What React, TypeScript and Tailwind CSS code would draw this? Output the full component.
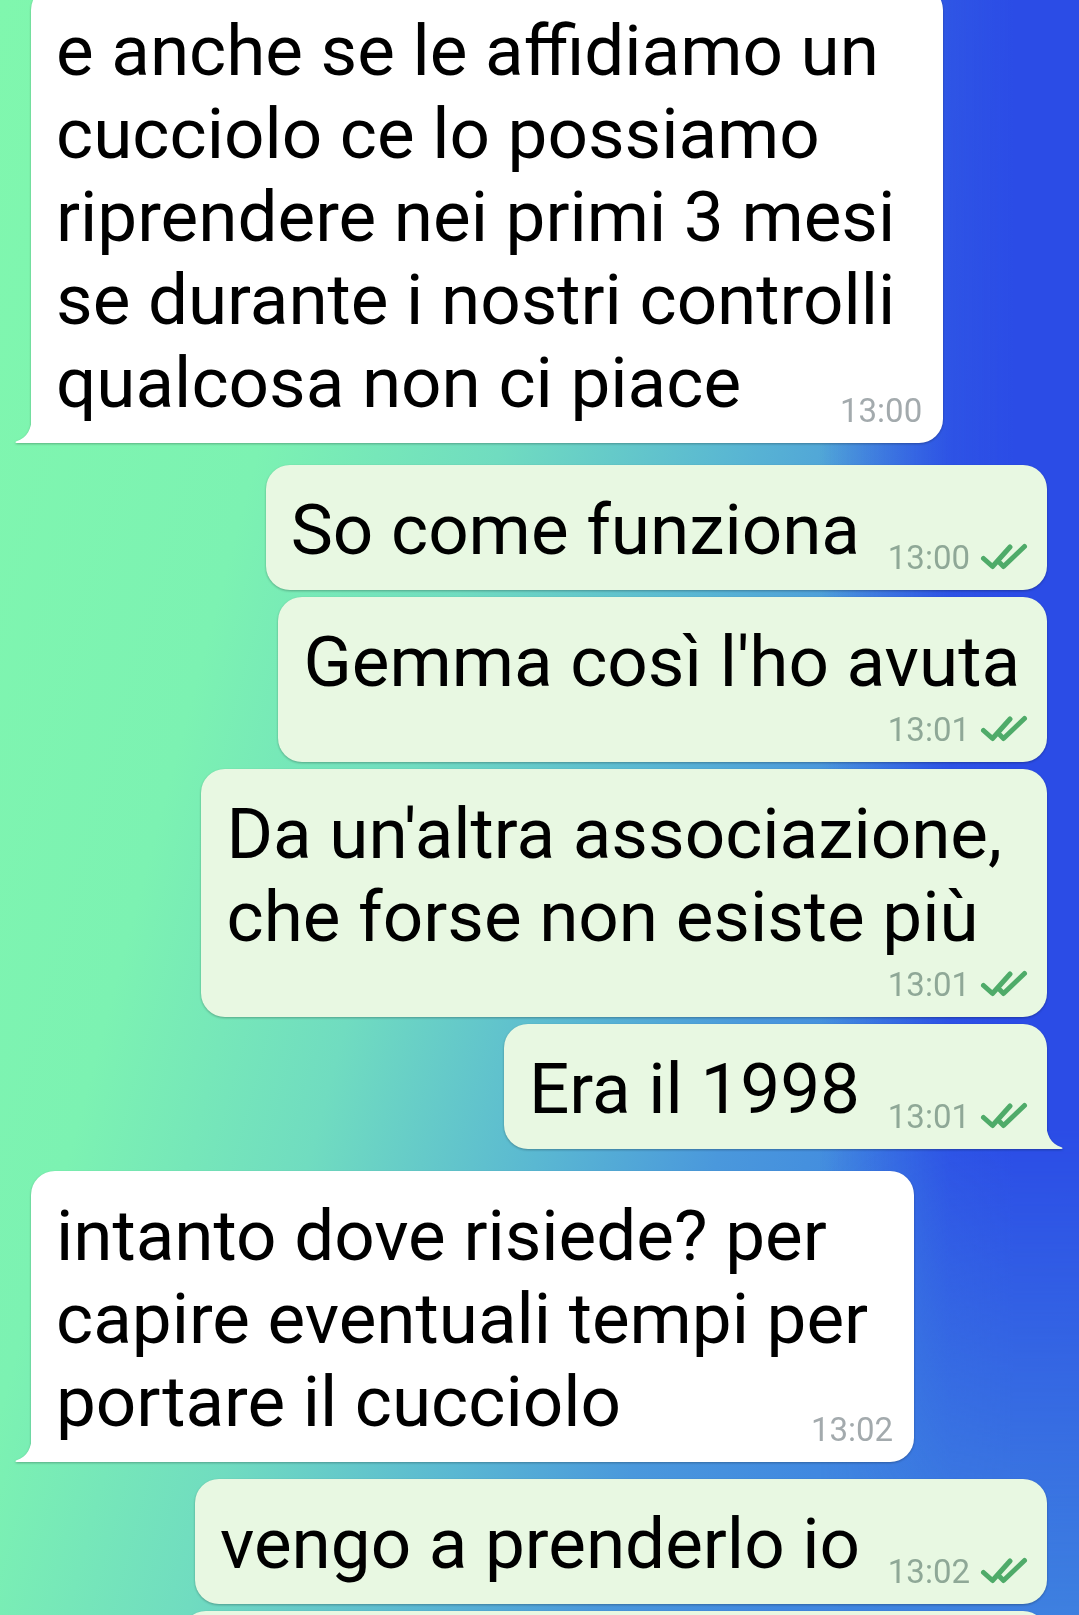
import React from 'react'

type Msg = {
  out: boolean
  lines: string[]
  time: string
  newRow?: boolean
  tail?: boolean
  wrap: string
  box: string
}

const messages: Msg[] = [
  {
    out: false,
    lines: [
      'e anche se le affidiamo un',
      'cucciolo ce lo possiamo',
      'riprendere nei primi 3 mesi',
      'se durante i nostri controlli',
      'qualcosa non ci piace',
    ],
    time: '13:00',
    tail: true,
    wrap: '-mt-[14px]',
    box: 'pr-[48px]',
  },
  { out: true, lines: ['So come funziona'], time: '13:00', wrap: 'mt-[22px]', box: 'pr-[19px]' },
  { out: true, lines: ["Gemma così l'ho avuta"], time: '13:01', newRow: true, wrap: 'mt-[7px]', box: 'pr-[27px]' },
  {
    out: true,
    lines: ["Da un'altra associazione,", 'che forse non esiste più'],
    time: '13:01',
    newRow: true,
    wrap: 'mt-[7px]',
    box: 'pr-[45px]',
  },
  { out: true, lines: ['Era il 1998'], time: '13:01', tail: true, wrap: 'mt-[7px]', box: 'pr-[19px]' },
  {
    out: false,
    lines: ['intanto dove risiede? per', 'capire eventuali tempi per', 'portare il cucciolo'],
    time: '13:02',
    tail: true,
    wrap: 'mt-[22px]',
    box: 'pr-[46px]',
  },
  { out: true, lines: ['vengo a prenderlo io'], time: '13:02', wrap: 'mt-[17px]', box: 'pr-[19px]' },
]

function Ticks() {
  return (
    <svg width="48" height="27" viewBox="0 0 48 27" fill="none" className="mb-[4px] shrink-0">
      <path d="M3.5 15.5 L12.5 23.5 L30 4" stroke="#4fab69" strokeWidth="5" strokeLinecap="round" strokeLinejoin="round" />
      <path d="M20 20 L23.5 23.5 L44.5 3.5" stroke="#4fab69" strokeWidth="5" strokeLinecap="round" strokeLinejoin="round" />
    </svg>
  )
}

function Bubble({ m }: { m: Msg }) {
  const sameRow = !m.newRow && !(!m.out && m.lines.length > 1)
  return (
    <div className={`relative drop-shadow-[0_1px_1px_rgba(0,0,0,0.28)] ${m.wrap}`}>
      <div
        className={`relative pt-[23px] pb-[19px] pl-[25px] ${m.box} ${
          m.out ? 'bg-[#e8f8e2]' : 'bg-white'
        } ${m.tail ? (m.out ? 'rounded-[24px] rounded-br-none' : 'rounded-[24px] rounded-bl-none') : 'rounded-[24px]'}`}
      >
        <p className="text-[71px] leading-[83px] text-black whitespace-nowrap">
          {m.lines.map((l, i) => (
            <React.Fragment key={i}>
              {i > 0 && <br />}
              {l}
            </React.Fragment>
          ))}
          {sameRow && m.out && <span className="inline-block w-[168px]" />}
          {sameRow && !m.out && <span className="inline-block w-[110px]" />}
        </p>
        {m.newRow && <div className="h-[40px]" />}
        <div
          className={`absolute bottom-[16px] flex items-end gap-[10px] text-[33px] leading-[33px] ${
            m.out ? 'right-[19px] text-[#8fa897]' : 'right-[21px] text-[#a3aaad]'
          }`}
        >
          <span>{m.time}</span>
          {m.out && <Ticks />}
        </div>
      </div>
      {m.tail && !m.out && (
        <svg width="17" height="28" viewBox="0 0 17 28" className="absolute left-[-16px] bottom-0">
          <path d="M17 0 C17 14 12 23 1.5 26.3 C0 26.8 0 28 1.8 28 L17 28 Z" fill="#ffffff" />
        </svg>
      )}
      {m.tail && m.out && (
        <svg width="17" height="28" viewBox="0 0 17 28" className="absolute right-[-16px] bottom-0">
          <path d="M0 0 C0 14 5 23 15.5 26.3 C17 26.8 17 28 15.2 28 L0 28 Z" fill="#e8f8e2" />
        </svg>
      )}
    </div>
  )
}

export default function App() {
  return (
    <div className="relative h-[1615px] w-full overflow-hidden font-['Roboto','Liberation_Sans',sans-serif] bg-[linear-gradient(105deg,#80f7ae_0%,#7cf2b2_25%,#70dcc0_41%,#5ab8d2_56%,#4a98dc_68%,#4088e0_80%,#3e80e0_100%)]">
      <div className="absolute inset-0 bg-[linear-gradient(90deg,rgba(43,76,230,0)_76%,rgba(43,76,230,0.9)_88%,#2b4ce6_94%)] [mask-image:linear-gradient(to_bottom,#000_0%,#000_70%,transparent_100%)]" />
      <div className="relative flex flex-col">
        {messages.map((m, i) => (
          <div key={i} className={m.out ? 'flex justify-end pr-[32px]' : 'flex justify-start pl-[31px]'}>
            <Bubble m={m} />
          </div>
        ))}
        <div className="flex justify-end pr-[32px] mt-[7px]">
          <div className="h-[124px] w-[865px] rounded-[24px] bg-[#e8f8e2] drop-shadow-[0_1px_1px_rgba(0,0,0,0.28)]" />
        </div>
      </div>
    </div>
  )
}
